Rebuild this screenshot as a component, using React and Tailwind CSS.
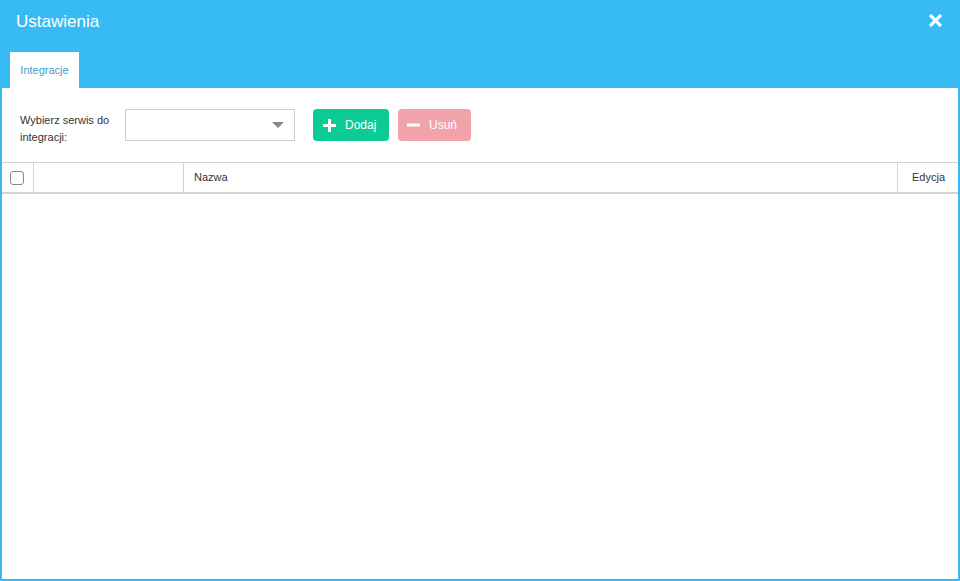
import React from 'react';

const Settings = () => {
  return (
    <div className="w-[960px] h-[581px] flex flex-col bg-[#38bbf5] font-['Liberation_Sans',Arial,sans-serif]">
      <div className="h-[52px] flex items-start justify-between px-4 pt-[12px]">
        <h1 className="text-[17px] text-white leading-5">Ustawienia</h1>
        <button className="mt-[2px] mr-[2px]">
          <svg width="13" height="13" viewBox="0 0 12 12">
            <path d="M2 2 L10 10 M10 2 L2 10" stroke="white" strokeWidth="3" strokeLinecap="square" />
          </svg>
        </button>
      </div>
      <div className="h-[36px] flex pl-[10px]">
        <div className="bg-white w-[69px] flex items-center justify-center text-[11px] text-[#3a9fd4]">
          Integracje
        </div>
      </div>
      <div className="flex-1 bg-white border-x-2 border-b-2 border-[#38bbf5] flex flex-col">
        <div className="flex items-center h-[74px] pl-[18px]">
          <label className="w-[105px] text-[11px] leading-[17px] text-[#333] pt-[8px]">
            Wybierz serwis do integracji:
          </label>
          <div className="w-[170px] h-[32px] border border-[#ccc] flex items-center justify-end pr-[10px]">
            <span className="w-0 h-0 border-l-[6px] border-r-[6px] border-t-[6px] border-l-transparent border-r-transparent border-t-[#888]" />
          </div>
          <button className="ml-[18px] w-[76px] h-[32px] rounded-[4px] bg-[#0dcb94] flex items-center pl-[9px] gap-[8px] text-white text-[12px]">
            <svg width="15" height="15" viewBox="0 0 15 15">
              <path d="M7.5 1 V14 M1 7.5 H14" stroke="white" strokeWidth="3" />
            </svg>
            Dodaj
          </button>
          <button className="ml-[9px] w-[73px] h-[32px] rounded-[4px] bg-[#f2a3aa] flex items-center pl-[8px] gap-[8px] text-white text-[12px]">
            <svg width="15" height="14" viewBox="0 0 15 14">
              <path d="M1 7 H14" stroke="white" strokeWidth="3" />
            </svg>
            Usuń
          </button>
        </div>
        <div className="flex h-[32px] border-t border-b-2 border-[#d4d4d4] text-[11px] text-[#333]">
          <div className="w-[32px] border-r border-[#d4d4d4] flex items-center justify-center pr-[1px]">
            <input type="checkbox" className="appearance-none w-[14px] h-[14px] rounded-[3px] border border-[#888] bg-white" />
          </div>
          <div className="w-[150px] border-r border-[#d4d4d4]" />
          <div className="flex-1 border-r border-[#d4d4d4] flex items-center pl-[10px]">Nazwa</div>
          <div className="w-[60px] flex items-center pl-[14px]">Edycja</div>
        </div>
        <div className="flex-1" />
      </div>
    </div>
  );
};

export default function App() {
  return <Settings />;
}
